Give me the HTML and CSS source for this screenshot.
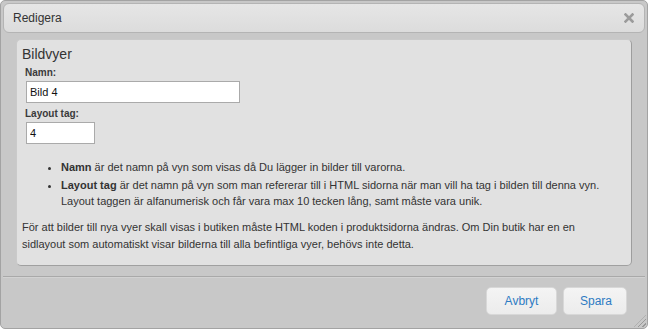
FILE: index.html
```html
<!DOCTYPE html>
<html>
<head>
<meta charset="utf-8">
<title>Redigera</title>
<link rel="stylesheet" href="styles.css">
</head>
<body>
<div class="dialog">
  <div class="titlebar">
    <span class="title">Redigera</span>
    <a class="close" href="#" title="Stäng">
      <svg width="10" height="10" viewBox="0 0 10 10"><path d="M1.5 1.5 L8.5 8.5 M8.5 1.5 L1.5 8.5" stroke="#9b9b9b" stroke-width="2.6" stroke-linecap="square"/></svg>
    </a>
  </div>

  <div class="content">
    <div class="panel">
      <h3 class="panel-title">Bildvyer</h3>
      <label class="field-label" for="namn">Namn:</label>
      <input class="field field-long" id="namn" type="text" value="Bild 4">
      <label class="field-label" for="tag">Layout tag:</label>
      <input class="field field-short" id="tag" type="text" value="4">

      <ul class="help">
        <li><b>Namn</b> är det namn på vyn som visas då Du lägger in bilder till varorna.</li>
        <li><b>Layout tag</b> är det namn på vyn som man refererar till i HTML sidorna när man vill ha tag i bilden till denna vyn. Layout taggen är alfanumerisk och får vara max 10 tecken lång, samt måste vara unik.</li>
      </ul>

      <p class="note">För att bilder till nya vyer skall visas i butiken måste HTML koden i produktsidorna ändras. Om Din butik har en en sidlayout som automatiskt visar bilderna till alla befintliga vyer, behövs inte detta.</p>
    </div>
  </div>

  <div class="buttonpane">
    <button class="btn" type="button">Avbryt</button>
    <button class="btn" type="button">Spara</button>
  </div>
  <span class="grip"></span>
</div>
</body>
</html>
```

FILE: styles.css
```css
/* Redigera dialog */

body
{ margin: 0;
background-color: #fff;
font-family: "Liberation Sans", Arial, sans-serif;
font-size: 11px;
color: #333;
}

div.dialog
{ position: relative;
box-sizing: border-box;
width: 648px;
height: 329px;
padding: 2px;
border: 1px solid #a3a3a3;
border-radius: 5px;
background-color: #c8c8c8;
display: flex;
flex-direction: column;
}

div.titlebar
{ height: 28px;
display: flex;
align-items: center;
justify-content: space-between;
padding: 0 10px 0 9px;
border: 1px solid #b4b4b4;
border-radius: 6px;
background: linear-gradient(#e6e6e6, #dcdcdc);
}

span.title
{ font-size: 12px;
color: #333;
}

a.close
{ display: flex;
width: 10px;
height: 10px;
}

div.content
{ padding: 6px 13px 10px 13px;
border-bottom: 1px solid #a9a9a9;
}

div.panel
{ height: 220px;
padding: 5px 5px 0 5px;
border: 1px solid #cacaca;
border-right-color: #9d9d9d;
border-bottom-color: #a0a0a0;
border-radius: 5px;
background-color: #e1e1e1;
}

h3.panel-title
{ margin: 0 0 4px 0;
font-size: 14px;
font-weight: normal;
line-height: 18px;
color: #333;
}

label.field-label
{ display: block;
margin-left: 3px;
font-size: 10px;
font-weight: bold;
line-height: 12px;
color: #3a3a3a;
}

input.field
{ display: block;
box-sizing: border-box;
height: 22px;
margin: 2px 0 5px 4px;
padding: 2px 3px;
border: 1px solid #aaa;
background: #fff;
font-family: "Liberation Sans", Arial, sans-serif;
font-size: 11px;
color: #111;
}

input.field-long
{ width: 214px;
}

input.field-short
{ width: 69px;
}

ul.help
{ margin: 15px 0 0 0;
padding-left: 39px;
line-height: 16px;
}

ul.help li
{ margin-bottom: 2px;
}

ul.help b
{ font-weight: bold;
}

p.note
{ margin: 10px 16px 0 0;
line-height: 17px;
}

div.buttonpane
{ flex: 1;
display: flex;
justify-content: flex-end;
align-items: flex-start;
gap: 6px;
padding: 9px 18px 0 0;
border-top: 1px solid #d2d2d2;
}

button.btn
{ height: 28px;
padding: 0 16px;
border: 1px solid #d8d8d8;
border-radius: 5px;
background: linear-gradient(#f4f4f4, #ececec);
font-family: "Liberation Sans", Arial, sans-serif;
font-size: 12px;
color: #2d7bc3;
}

button.btn:first-child
{ width: 71px;
}

button.btn:last-child
{ width: 64px;
}

/* resize grip over the corner */
span.grip
{ position: absolute;
right: 1px;
bottom: 1px;
width: 12px;
height: 12px;
background: repeating-linear-gradient(135deg, transparent 0 2px, #999 2px 3px);
clip-path: polygon(100% 0, 100% 100%, 0 100%);
}
```
